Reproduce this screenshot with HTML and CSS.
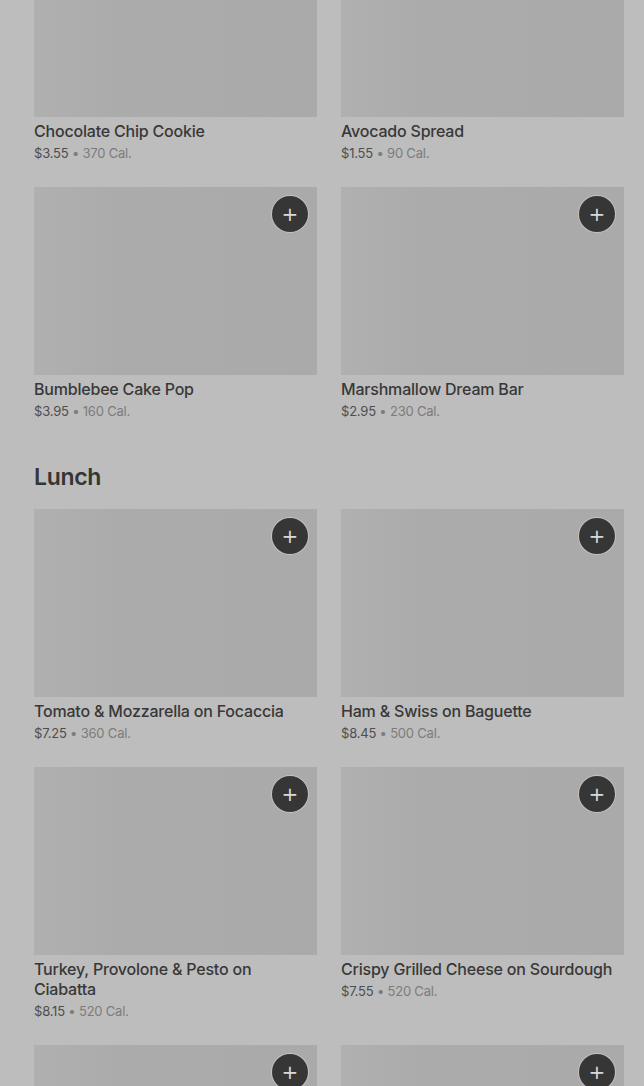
FILE: index.html
```html
<!DOCTYPE html>
<html lang="en">
<head>
    <meta charset="UTF-8">
    <meta name="viewport" content="width=device-width, initial-scale=1.0">
    <title>Menu</title>
    <link rel="stylesheet" href="styles.css">
</head>
<body>

    <div class="menu">
        <!-- Bakery (scrolled past the heading) -->
        <div class="item-grid">
            <div class="item">
                <div class="item-photo"></div>
                <div class="item-name">Chocolate Chip Cookie</div>
                <div class="item-meta"><span class="price">$3.55</span> • 370 Cal.</div>
            </div>
            <div class="item">
                <div class="item-photo"></div>
                <div class="item-name">Avocado Spread</div>
                <div class="item-meta"><span class="price">$1.55</span> • 90 Cal.</div>
            </div>
            <div class="item">
                <div class="item-photo"><button class="add-btn">+</button></div>
                <div class="item-name">Bumblebee Cake Pop</div>
                <div class="item-meta"><span class="price">$3.95</span> • 160 Cal.</div>
            </div>
            <div class="item">
                <div class="item-photo"><button class="add-btn">+</button></div>
                <div class="item-name">Marshmallow Dream Bar</div>
                <div class="item-meta"><span class="price">$2.95</span> • 230 Cal.</div>
            </div>
        </div>

        <h2 class="section-title">Lunch</h2>
        <div class="item-grid">
            <div class="item">
                <div class="item-photo"><button class="add-btn">+</button></div>
                <div class="item-name">Tomato &amp; Mozzarella on Focaccia</div>
                <div class="item-meta"><span class="price">$7.25</span> • 360 Cal.</div>
            </div>
            <div class="item">
                <div class="item-photo"><button class="add-btn">+</button></div>
                <div class="item-name">Ham &amp; Swiss on Baguette</div>
                <div class="item-meta"><span class="price">$8.45</span> • 500 Cal.</div>
            </div>
            <div class="item">
                <div class="item-photo"><button class="add-btn">+</button></div>
                <div class="item-name">Turkey, Provolone &amp; Pesto on Ciabatta</div>
                <div class="item-meta"><span class="price">$8.15</span> • 520 Cal.</div>
            </div>
            <div class="item">
                <div class="item-photo"><button class="add-btn">+</button></div>
                <div class="item-name">Crispy Grilled Cheese on Sourdough</div>
                <div class="item-meta"><span class="price">$7.55</span> • 520 Cal.</div>
            </div>
            <div class="item">
                <div class="item-photo"><button class="add-btn">+</button></div>
            </div>
            <div class="item">
                <div class="item-photo"><button class="add-btn">+</button></div>
            </div>
        </div>
    </div>

</body>
</html>
```

FILE: styles.css
```css
body { font-family: Inter, "Noto Sans", sans-serif; margin: 0; padding: 0; background: #bdbdbd; color: #363636; overflow: hidden; }

/* Menu list (page is scrolled part-way into the first section) */
.menu { margin-top: -71px; padding: 0 20px 0 34px; }

.section-title { font-size: 23px; font-weight: 600; line-height: 32px; margin: 40px 0 16px; color: #353535; letter-spacing: -0.3px; }

/* Item Grid */
.item-grid { display: grid; grid-template-columns: 1fr 1fr; column-gap: 24px; row-gap: 24px; }

.item-photo {
    position: relative;
    height: 188px;
    background: linear-gradient(90deg, #b0b0b0 0%, #ababab 30%, #aaaaaa 100%);
}

/* Add button */
.add-btn {
    position: absolute;
    top: 9px;
    right: 9px;
    width: 36px;
    height: 36px;
    border: none;
    border-radius: 50%;
    background: #363636;
    color: #d9d9d9;
    font-family: "DejaVu Sans", sans-serif;
    font-size: 20px;
    line-height: 36px;
    padding: 0;
    text-align: center;
    box-shadow: 0 0 0 1px rgba(220, 220, 220, 0.5);
    cursor: pointer;
}

.item-name { margin-top: 4px; font-size: 16px; line-height: 20px; font-weight: 500; color: #383838; letter-spacing: -0.2px; }
.item-meta { margin-top: 2px; font-size: 13px; line-height: 20px; color: #7c7c7c; letter-spacing: -0.2px; }
.price { color: #4e4e4e; }
```
